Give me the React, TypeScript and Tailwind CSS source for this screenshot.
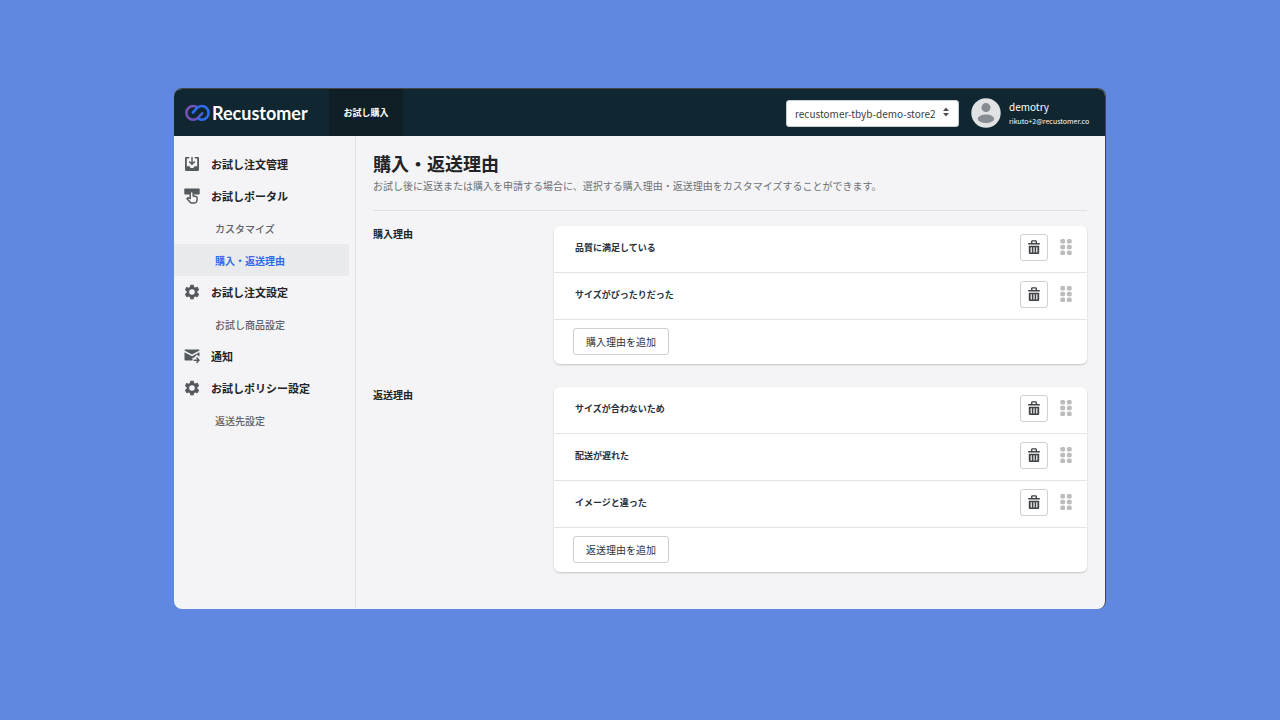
import { useState } from 'react'
import type { ReactNode } from 'react'

function Logo() {
  return (
    <svg className="h-[18px] w-[26px]" viewBox="0 0 26 18" fill="none" strokeWidth="2.6" strokeLinecap="round">
      <defs>
        <linearGradient id="ring" x1="0" y1="0" x2="26" y2="0" gradientUnits="userSpaceOnUse">
          <stop offset="0" stopColor="#7a4fb0" />
          <stop offset="0.45" stopColor="#6454c0" />
          <stop offset="0.7" stopColor="#4461de" />
          <stop offset="1" stopColor="#2f6cf0" />
        </linearGradient>
      </defs>
      <path d="M11.600 3C10.600 2.300 9.500 2 8.300 2A6.900 6.900 0 0 0 8.300 15.800C10.400 15.800 11.700 15 13.100 13.600L17.200 9.300" stroke="url(#ring)" />
      <path d="M13.600 14.800C14.600 15.500 15.500 15.800 16.700 15.800A6.900 6.900 0 0 0 16.700 2C14.700 2 13.300 2.800 11.900 4.200L7.900 8.500" stroke="#2f6cf0" />
    </svg>
  )
}

function InboxIcon() {
  return (
    <svg className="h-4 w-4" viewBox="0 0 16 16" fill="#54595e">
      <path d="M2.200 1H5.200v1.500H2.800v7.700h2.700c.3 1.200 1.300 1.900 2.500 1.900s2.200-.7 2.500-1.900h2.700V2.500h-2.400V1h3c.7 0 1.200.5 1.200 1.200v11.600c0 .7-.5 1.200-1.200 1.200H2.200c-.7 0-1.200-.5-1.200-1.200V2.200C1 1.500 1.500 1 2.200 1z" />
      <path d="M8 1v7M5.200 5.400 8 8.200l2.800-2.800" fill="none" stroke="#54595e" strokeWidth="1.400" />
    </svg>
  )
}

function TouchIcon() {
  return (
    <svg className="h-4 w-4" viewBox="0 0 16 16" fill="#54595e">
      <rect x="0.300" y="0.500" width="15.400" height="6" rx="0.800" />
      <path
        d="M6.200 10.500V5a1.500 1.500 0 0 1 3 0v3l2.700.6c.9.2 1.400.9 1.300 1.800l-.4 2.600c-.2 1.200-1 2-2.200 2H7.900c-.8 0-1.400-.3-1.900-.9L3 10.700c.6-.9 1.500-1 2.300-.6z"
        fill="#f4f4f6"
        stroke="#54595e"
        strokeWidth="1.500"
        strokeLinejoin="round"
      />
    </svg>
  )
}

function GearIcon() {
  return (
    <svg className="h-4 w-4" viewBox="0 0 24 24" fill="#54595e">
      <path d="M20.100 13.100c.05-.36.08-.73.08-1.100s-.03-.74-.08-1.100l2.350-1.800c.2-.17.26-.46.13-.7l-2.200-3.850c-.14-.24-.43-.33-.68-.24l-2.750 1.110c-.57-.44-1.200-.8-1.880-1.080l-.42-2.930A.55.55 0 0 0 14.100 1H9.900c-.28 0-.5.2-.55.46l-.42 2.930c-.68.28-1.300.64-1.880 1.080L4.300 4.360c-.25-.09-.54 0-.68.24L1.420 8.450c-.14.24-.08.53.13.7l2.350 1.800c-.05.34-.08.7-.08 1.050s.03.74.08 1.100l-2.350 1.800c-.2.17-.26.46-.13.7l2.200 3.850c.14.240.430.330.680.240l2.750-1.110c.57.440 1.200.800 1.880 1.080l.42 2.930c.04.260.270.460.550.460h4.200c.28 0 .5-.2.550-.46l.42-2.930c.68-.28 1.300-.64 1.880-1.080l2.750 1.110c.25.090.54 0 .68-.24l2.200-3.850c.14-.24.080-.53-.13-.7zM12 16.200a4.200 4.200 0 1 1 0-8.400 4.200 4.200 0 0 1 0 8.400z" />
    </svg>
  )
}

function MailIcon() {
  return (
    <svg className="h-4 w-4" viewBox="0 0 16 16" fill="#54595e">
      <path d="M.5 2.500c0-.6.400-1 1-1h13c.6 0 1 .4 1 1L8 6.600z" />
      <path d="M.5 4.200 8 8.300l7.500-4.100v4.300l-2.700-1.700-2.800 3H8.500v2.700h-7c-.6 0-1-.4-1-1z" />
      <path d="M9.600 12.200h5M12.500 9.600l2.500 2.600-2.500 2.600" fill="none" stroke="#54595e" strokeWidth="1.500" />
    </svg>
  )
}

function TrashIcon() {
  return (
    <svg className="h-4 w-3" viewBox="0 0 12 16" fill="#3f4347">
      <path d="M3 4V2.800C3 1.800 3.600 1.200 4.500 1.200h3c.9 0 1.500.6 1.500 1.600V4h2.800v1.400H.2V4zm1.400 0h3.200V2.600H4.400z" fillRule="evenodd" />
      <path d="M.8 6.700h10.400v7.100c0 .8-.5 1.300-1.300 1.300H2.100c-.8 0-1.300-.5-1.300-1.300zm1.800 1.500v5.200h1.200V8.200zm2.800 0v5.200h1.200V8.200zm2.800 0v5.200h1.200V8.200z" fillRule="evenodd" />
    </svg>
  )
}

function DragIcon() {
  return (
    <svg className="h-4 w-3" viewBox="0 0 12 16" fill="#bcbcbc">
      {[0, 5.7, 11.4].map(y => (
        <g key={y}>
          <rect x="0.300" y={y} width="4.800" height="4.600" rx="1.500" />
          <rect x="6.900" y={y} width="4.800" height="4.600" rx="1.500" />
        </g>
      ))}
    </svg>
  )
}

type NavGroup = { label: string; icon: ReactNode; children: string[] }

const navGroups: NavGroup[] = [
  { label: 'お試し注文管理', icon: <InboxIcon />, children: [] },
  { label: 'お試しポータル', icon: <TouchIcon />, children: ['カスタマイズ', '購入・返送理由'] },
  { label: 'お試し注文設定', icon: <GearIcon />, children: ['お試し商品設定'] },
  { label: '通知', icon: <MailIcon />, children: [] },
  { label: 'お試しポリシー設定', icon: <GearIcon />, children: ['返送先設定'] },
]

function Header() {
  return (
    <header className="flex h-[47px] items-center bg-[#102631] text-white">
      <a href="#" className="flex w-[155px] items-center gap-px pl-[11px]">
        <Logo />
        <span className="font-['Lato',sans-serif] text-[18px] leading-6 font-bold">Recustomer</span>
      </a>
      <a href="#" className="flex h-full w-[74px] items-center justify-center bg-[#101e26] text-[9px] font-bold">お試し購入</a>

      <div className="ml-auto flex items-center gap-3 pr-3">
        <div className="relative">
          <select
            aria-label="ストア"
            className="h-[27px] w-[173px] appearance-none rounded-[3px] border border-[#c9cdd1] bg-white pl-2 text-[10px] text-[#3a3d40]"
          >
            <option>recustomer-tbyb-demo-store2</option>
          </select>
          <svg className="pointer-events-none absolute top-2 right-2.5 h-2.5 w-1.5" viewBox="0 0 6 10" fill="#4a4e52">
            <path d="M3 0.500 6 4H0zM3 9.500 0 6h6z" />
          </svg>
        </div>
        <div className="flex items-center gap-2">
          <svg className="h-[30px] w-[30px]" viewBox="0 0 30 30">
            <circle cx="15" cy="15" r="14.700" fill="#e0e2e4" />
            <circle cx="15" cy="9.600" r="4.500" fill="#868c91" />
            <ellipse cx="15" cy="20.700" rx="8.200" ry="4.300" fill="#868c91" />
          </svg>
          <div className="min-w-[84px]">
            <p className="text-[10px] leading-4">demotry</p>
            <p className="text-[7px] leading-3">rikuto+2@recustomer.co</p>
          </div>
        </div>
      </div>
    </header>
  )
}

function Sidebar({ active, onSelect }: { active: string; onSelect: (label: string) => void }) {
  return (
    <nav className="w-[182px] shrink-0 border-r border-[#e2e3e5] pt-3">
      {navGroups.map(group => (
        <div key={group.label}>
          <a href="#" className="flex h-8 items-center gap-[11px] pl-2.5 text-[11px] font-bold text-[#212326]">
            {group.icon}
            {group.label}
          </a>
          {group.children.map(child => (
            <a
              key={child}
              href="#"
              onClick={() => onSelect(child)}
              className={
                child === active
                  ? 'mr-1.5 flex h-8 items-center rounded-r-[3px] bg-[#e9eaec] pl-[41px] text-[10px] font-bold text-[#2f6bea]'
                  : 'mr-1.5 flex h-8 items-center pl-[41px] text-[10px] font-medium text-[#5f6266]'
              }
            >
              {child}
            </a>
          ))}
        </div>
      ))}
    </nav>
  )
}

function ReasonSection({ title, initial }: { title: string; initial: string[] }) {
  const [reasons, setReasons] = useState(initial)

  return (
    <section className="flex">
      <h2 className="w-[181px] shrink-0 text-[10px] leading-4 font-bold text-[#212326]">{title}</h2>
      <div className="flex-1 rounded-[6px] bg-white shadow-[0_1px_2px_rgba(0,0,0,0.2)]">
        <ul>
          {reasons.map((reason, i) => (
            <li key={i} className="flex h-[47px] items-center gap-3 border-b border-[#e3e4e6] pr-[15px] pb-1 pl-[21px]">
              <span className="flex-1 pt-0.5 text-[9px] leading-4 font-bold text-[#25303b]">{reason}</span>
              <button
                aria-label="削除"
                onClick={() => setReasons(reasons.filter((_, n) => n !== i))}
                className="flex h-[27px] w-7 items-center justify-center rounded-[3px] border border-[#cfd0d2] bg-white"
              >
                <TrashIcon />
              </button>
              <DragIcon />
            </li>
          ))}
        </ul>
        <div className="flex h-11 items-center px-[19px] pb-0.5">
          <button
            onClick={() => setReasons([...reasons, ''])}
            className="h-[27px] rounded-[3px] border border-[#cfd0d2] bg-white px-3 text-[10px] text-[#303336]"
          >
            {title}を追加
          </button>
        </div>
      </div>
    </section>
  )
}

export default function App() {
  const [active, setActive] = useState('購入・返送理由')

  return (
    <div className="min-h-screen bg-[#6088e0] px-[174px] py-[88px] font-['Noto_Sans_CJK_JP',sans-serif]">
      <div className="overflow-hidden rounded-[8px] border-t border-r border-[#44474a] bg-[#f4f4f6]">
        <Header />
        <div className="flex">
          <Sidebar active={active} onSelect={setActive} />
          <main className="flex-1 pt-[15px] pr-[18px] pb-[37px] pl-[17px]">
            <h1 className="text-[18px] leading-6 font-bold text-[#212326]">購入・返送理由</h1>
            <p className="border-b border-[#dfe0e2] pt-[3px] pb-4 text-[10px] leading-4 text-[#6d7175]">
              お試し後に返送または購入を申請する場合に、選択する購入理由・返送理由をカスタマイズすることができます。
            </p>
            <div className="flex flex-col gap-[23px] pt-[15px]">
              <ReasonSection title="購入理由" initial={['品質に満足している', 'サイズがぴったりだった']} />
              <ReasonSection title="返送理由" initial={['サイズが合わないため', '配送が遅れた', 'イメージと違った']} />
            </div>
          </main>
        </div>
      </div>
    </div>
  )
}
